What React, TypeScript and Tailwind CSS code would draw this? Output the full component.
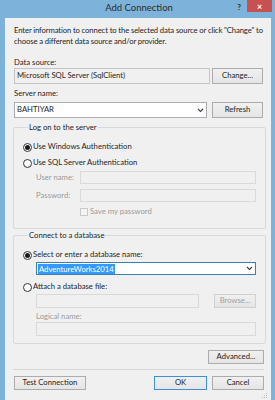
import React from 'react';

const Chevron: React.FC = () => (
  <svg width="7" height="5" viewBox="0 0 7 5" className="shrink-0">
    <path d="M1 1 L3.5 3.5 L6 1" fill="none" stroke="#404040" strokeWidth="1.1" />
  </svg>
);

const Radio: React.FC<{ checked?: boolean }> = ({ checked }) => (
  <span className="w-[9px] h-[9px] rounded-full border border-[#333333] bg-white flex items-center justify-center shrink-0">
    {checked && <span className="w-[5px] h-[5px] rounded-full bg-[#1a1a1a]" />}
  </span>
);

const Button: React.FC<{ label: string; className?: string; disabled?: boolean; isDefault?: boolean }> = ({
  label,
  className = '',
  disabled,
  isDefault,
}) => (
  <button
    className={`flex items-center justify-center border bg-gradient-to-b from-[#f0f0f0] to-[#e5e5e5] ${
      isDefault ? 'border-[#3c8fd8]' : 'border-[#acacac]'
    } ${disabled ? 'text-[#a0a0a0] border-[#d0d0d0]' : 'text-[#1e1e1e]'} ${className}`}
  >
    {label}
  </button>
);

export default function App() {
  return (
    <div className="w-[275px] h-[400px] bg-[#7db3db] flex flex-col overflow-hidden font-['Segoe_UI',Lato,sans-serif] text-[7.7px] text-[#1e1e1e]">
      {/* title bar */}
      <div className="h-[18px] grid grid-cols-[1fr_auto_1fr] shrink-0">
        <div />
        <div className="text-[9.5px] text-[#2b2b2b] leading-[16px] pl-[3px]">Add Connection</div>
        <div className="flex justify-end items-start">
          <span className="text-[8px] font-bold text-[#2b2b2b] leading-[14px] mr-[6px]">?</span>
          <span className="w-[25px] h-[12px] bg-[#c75050] mr-[3px] flex items-center justify-center text-white text-[9px] font-bold leading-none">
            ×
          </span>
        </div>
      </div>

      {/* client area */}
      <div className="flex-1 ml-[5px] mr-[4px] bg-[#f0f0f0] flex flex-col pl-[8px] pr-[3px]">
        <p className="mt-[7px] pl-[1px] leading-[11px] tracking-[-0.12px]">
          Enter information to connect to the selected data source or click "Change" to choose a different data source and/or provider.
        </p>

        <div className="mt-[10px] pl-[1px] leading-[11px]">Data source:</div>
        <div className="flex items-center gap-[2px] pl-[1px]">
          <div className="w-[196px] h-[16px] border border-[#c4c4c4] bg-[#f0f0f0] flex items-center px-[2px]">
            Microsoft SQL Server (SqlClient)
          </div>
          <Button label="Change..." className="w-[51px] h-[16px]" />
        </div>

        <div className="mt-[4px] pl-[1px] leading-[11px]">Server name:</div>
        <div className="mt-[3px] flex items-center pl-[1px]">
          <div className="w-[193px] h-[16px] border border-[#abadb3] bg-white flex items-center justify-between px-[2px]">
            <span>BAHTIYAR</span>
            <Chevron />
          </div>
          <Button label="Refresh" className="ml-[5px] w-[51px] h-[16px]" />
        </div>

        <fieldset className="mt-[4px] mr-[2px] border border-[#d5d9dd] rounded-[2px] pl-[9px] pr-[9px] pb-[11px]">
          <legend className="ml-[5px] px-[1px] leading-[11px]">Log on to the server</legend>
          <div className="mt-[8px] h-[12px] flex items-center gap-[1px]">
            <Radio checked />
            <span>Use Windows Authentication</span>
          </div>
          <div className="mt-[4px] h-[12px] flex items-center gap-[1px]">
            <Radio />
            <span>Use SQL Server Authentication</span>
          </div>
          <div className="mt-[2px] flex items-center pl-[13px] text-[#9a9a9a]">
            <span className="w-[44px]">User name:</span>
            <div className="flex-1 h-[13px] border border-[#d9d9d9] bg-[#f0f0f0]" />
          </div>
          <div className="mt-[5px] flex items-center pl-[13px] text-[#9a9a9a]">
            <span className="w-[44px]">Password:</span>
            <div className="flex-1 h-[13px] border border-[#d9d9d9] bg-[#f0f0f0]" />
          </div>
          <div className="mt-[5px] h-[10px] flex items-center pl-[57px] gap-[2px] text-[#9a9a9a]">
            <span className="w-[8px] h-[8px] border border-[#c8c8c8] bg-[#f4f4f4]" />
            <span>Save my password</span>
          </div>
        </fieldset>

        <fieldset className="mt-[1px] mr-[2px] border border-[#d5d9dd] rounded-[2px] pl-[9px] pr-[9px] pb-[7px]">
          <legend className="ml-[5px] px-[1px] leading-[11px]">Connect to a database</legend>
          <div className="mt-[8px] h-[12px] flex items-center gap-[1px]">
            <Radio checked />
            <span>Select or enter a database name:</span>
          </div>
          <div className="mt-[1px] ml-[13px] h-[13px] border border-[#3c7fb1] bg-white flex items-center justify-between pl-[1px] pr-[2px]">
            <span className="bg-[#3399ff] text-white leading-[10px] px-[1px]">AdventureWorks2014</span>
            <Chevron />
          </div>
          <div className="mt-[6px] h-[12px] flex items-center gap-[1px]">
            <Radio />
            <span>Attach a database file:</span>
          </div>
          <div className="mt-[1px] ml-[13px] flex items-center gap-[15px]">
            <div className="flex-1 h-[14px] border border-[#d9d9d9] bg-[#f0f0f0]" />
            <Button label="Browse..." disabled className="w-[42px] h-[14px]" />
          </div>
          <div className="mt-[3px] ml-[13px] leading-[11px] text-[#9a9a9a]">Logical name:</div>
          <div className="ml-[13px] h-[14px] border border-[#d9d9d9] bg-[#f0f0f0]" />
        </fieldset>

        <div className="mt-[6px] flex justify-end pr-[4px]">
          <Button label="Advanced..." className="w-[56px] h-[14px]" />
        </div>

        <div className="mt-[5px] mr-[4px] h-px bg-[#d5d5d5]" />

        <div className="mt-[6px] flex items-center pl-[1px] pr-[4px]">
          <Button label="Test Connection" className="w-[72px] h-[14px]" />
          <div className="flex-1" />
          <Button label="OK" isDefault className="w-[53px] h-[14px]" />
          <Button label="Cancel" className="ml-[5px] w-[52px] h-[14px]" />
        </div>

        <div className="flex-1 flex justify-end items-end pb-[1px]">
          <svg width="6" height="6" viewBox="0 0 6 6">
            <rect x="4" y="0" width="1" height="1" fill="#b8b8b8" />
            <rect x="2" y="2" width="1" height="1" fill="#b8b8b8" />
            <rect x="4" y="2" width="1" height="1" fill="#b8b8b8" />
            <rect x="0" y="4" width="1" height="1" fill="#b8b8b8" />
            <rect x="2" y="4" width="1" height="1" fill="#b8b8b8" />
            <rect x="4" y="4" width="1" height="1" fill="#b8b8b8" />
          </svg>
        </div>
      </div>
    </div>
  );
}
